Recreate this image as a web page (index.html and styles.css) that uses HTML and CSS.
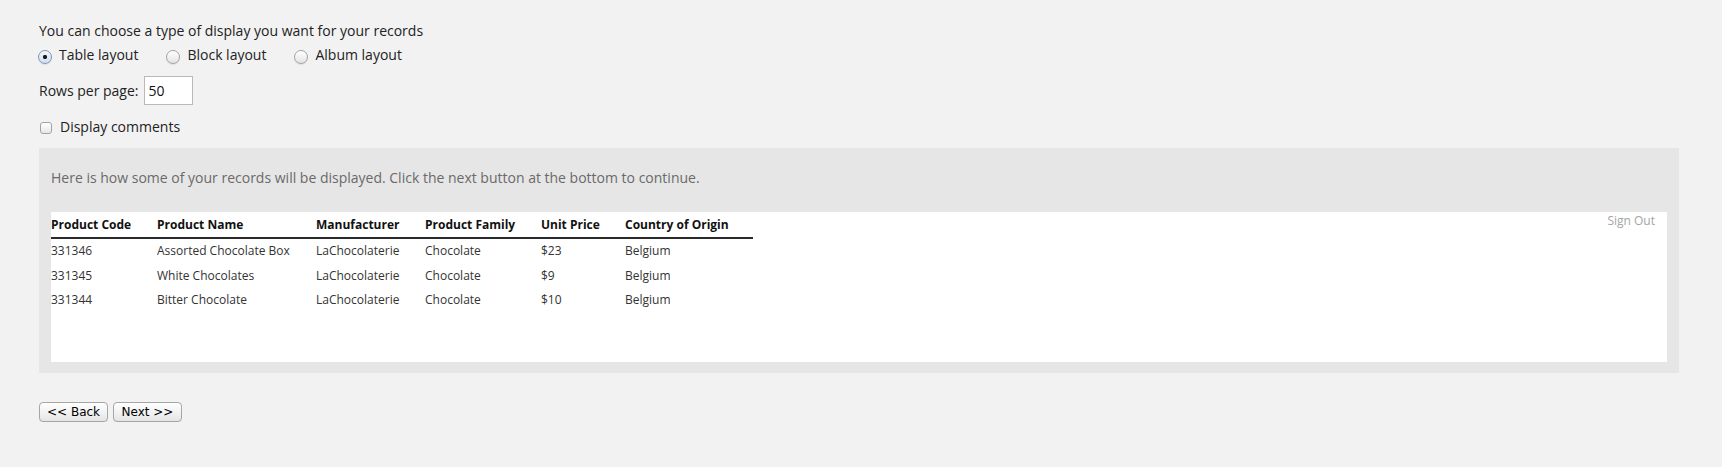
FILE: index.html
```html
<!DOCTYPE html>
<html>
<head>
<meta charset="utf-8">
<title>Display options</title>
<link rel="stylesheet" href="styles.css">
</head>
<body>
<div class="page">
  <p class="intro">You can choose a type of display you want for your records</p>
  <div class="layouts">
    <label class="opt"><input type="radio" name="layout" class="radio" checked><span>Table layout</span></label>
    <label class="opt"><input type="radio" name="layout" class="radio"><span>Block layout</span></label>
    <label class="opt"><input type="radio" name="layout" class="radio"><span>Album layout</span></label>
  </div>
  <div class="rows">
    <span>Rows per page:</span>
    <input type="text" class="rows-input" value="50">
  </div>
  <label class="comments"><input type="checkbox" class="check"><span>Display comments</span></label>

  <div class="panel">
    <p class="panel-head">Here is how some of your records will be displayed. Click the next button at the bottom to continue.</p>
    <div class="preview">
      <table class="records">
        <colgroup>
          <col class="c1"><col class="c2"><col class="c3"><col class="c4"><col class="c5"><col class="c6">
        </colgroup>
        <thead>
          <tr><th>Product Code</th><th>Product Name</th><th>Manufacturer</th><th>Product Family</th><th>Unit Price</th><th>Country of Origin</th></tr>
        </thead>
        <tbody>
          <tr><td>331346</td><td>Assorted Chocolate Box</td><td>LaChocolaterie</td><td>Chocolate</td><td>$23</td><td>Belgium</td></tr>
          <tr><td>331345</td><td>White Chocolates</td><td>LaChocolaterie</td><td>Chocolate</td><td>$9</td><td>Belgium</td></tr>
          <tr><td>331344</td><td>Bitter Chocolate</td><td>LaChocolaterie</td><td>Chocolate</td><td>$10</td><td>Belgium</td></tr>
        </tbody>
      </table>
      <a class="signout">Sign Out</a>
    </div>
  </div>

  <div class="buttons">
    <button class="btn">&lt;&lt; Back</button>
    <button class="btn">Next &gt;&gt;</button>
  </div>
</div>
</body>
</html>
```

FILE: styles.css
```css
html, body {
  margin: 0;
  padding: 0;
  background: #f2f2f2;
}

body {
  font-family: "Open Sans", "Liberation Sans", sans-serif;
  font-size: 14px;
  line-height: 20px;
  color: #222;
}

.page {
  padding: 21px 43px 0 39px;
}

.intro {
  margin: 0;
}

.layouts {
  display: flex;
  align-items: center;
  height: 20px;
  margin-top: 4px;
}

.opt {
  display: inline-flex;
  align-items: center;
  gap: 7px;
  margin-right: 29px;
}

.radio {
  -webkit-appearance: none;
  appearance: none;
  width: 14px;
  height: 14px;
  margin: 3px 0 0 -1px;
  border: 1px solid #a3a3a3;
  border-radius: 50%;
  background: linear-gradient(#ffffff, #e4e4e4);
  box-sizing: border-box;
  box-shadow: 0 1px 1px rgba(0,0,0,0.08);
}

.radio:checked {
  border-color: #7f95b3;
  background: radial-gradient(circle, #1c1c1c 0 1.8px, transparent 2.4px), linear-gradient(#f4f8fd, #cfdff2);
}

.rows {
  display: flex;
  align-items: center;
  gap: 5px;
  margin-top: 11px;
}

.rows-input {
  width: 49px;
  height: 29px;
  box-sizing: border-box;
  border: 1px solid #b9b9b9;
  background: #fff;
  padding: 0 0 0 4px;
  margin: 0;
  font-family: "Open Sans", sans-serif;
  font-size: 14px;
  color: #111;
}

.comments {
  display: flex;
  align-items: center;
  gap: 8px;
  margin-top: 12px;
}

.check {
  -webkit-appearance: none;
  appearance: none;
  width: 12px;
  height: 12px;
  margin: 1px 0 0 1px;
  border: 1px solid #a3a3a3;
  border-radius: 3px;
  background: linear-gradient(#ffffff, #e6e6e6);
  box-sizing: border-box;
}

.panel {
  margin-top: 11px;
  background: #e6e6e6;
  padding: 20px 12px 11px 12px;
}

.panel-head {
  margin: 0 0 24px;
  font-size: 14px;
  line-height: 20px;
  color: #6a6a6a;
}

.preview {
  display: flex;
  justify-content: space-between;
  align-items: flex-start;
  background: #fff;
  height: 150px;
  padding-right: 12px;
}

.records {
  table-layout: fixed;
  width: 702px;
  border-collapse: collapse;
  border-spacing: 0;
  font-size: 12px;
}

.c1 { width: 106px; }
.c2 { width: 159px; }
.c3 { width: 109px; }
.c4 { width: 116px; }
.c5 { width: 84px; }
.c6 { width: 128px; }

.records th {
  text-align: left;
  font-weight: 700;
  color: #111;
  line-height: 16px;
  padding: 5px 0 4px;
  border-bottom: 2px solid #2a2a2a;
  white-space: nowrap;
}

.records td {
  color: #333;
  line-height: 16.5px;
  padding: 4px 0 4px;
  white-space: nowrap;
}

.signout {
  font-size: 12px;
  line-height: 16px;
  padding-top: 1px;
  color: #a5a5a5;
  cursor: pointer;
}

.buttons {
  display: flex;
  gap: 5px;
  margin-top: 29px;
}

.btn {
  width: 69px;
  height: 20px;
  padding: 0;
  margin: 0;
  font-family: "DejaVu Sans", "Liberation Sans", sans-serif;
  font-size: 12px;
  line-height: 18px;
  color: #000;
  background: linear-gradient(#ffffff, #f0f0f0 60%, #e4e4e4);
  border: 1px solid #a6a6a6;
  border-radius: 4px;
  box-shadow: 0 1px 0 rgba(0,0,0,0.06);
}
```
